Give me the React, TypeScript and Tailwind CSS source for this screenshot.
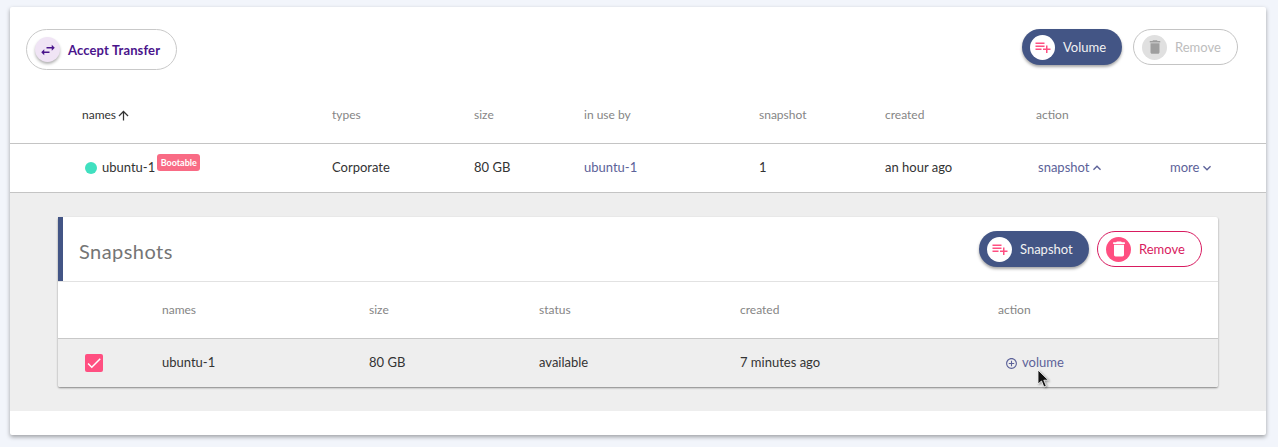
import React from "react";

const P = {
  trash: "M6 19c0 1.1.9 2 2 2h8c1.1 0 2-.9 2-2V7H6v12zM19 4h-3.5l-1-1h-5l-1 1H5v2h14V4z",
  add: "M14 10H2v2h12v-2zm0-4H2v2h12V6zm4 8v-4h-2v4h-4v2h4v4h2v-4h4v-2h-4zM2 16h8v-2H2v2z",
  swap: "M6.99 11L3 15l3.99 4v-3H14v-2H6.99v-3zM21 9l-3.99-4v3H10v2h7.01v3L21 9z",
  up: "M4 12l1.41 1.41L11 7.83V20h2V7.83l5.58 5.59L20 12l-8-8-8 8z",
  less: "M12 8l-6 6 1.41 1.41L12 10.83l4.59 4.58L18 14z",
  more: "M16.59 8.59L12 13.17 7.41 8.59 6 10l6 6 6-6z",
  circle: "M13 7h-2v4H7v2h4v4h2v-4h4v-2h-4V7zm-1-5C6.48 2 2 6.48 2 12s4.48 10 10 10 10-4.48 10-10S17.52 2 12 2zm0 18c-4.41 0-8-3.59-8-8s3.59-8 8-8 8 3.59 8 8-3.59 8-8 8z",
  check: "M9 16.17L4.83 12l-1.42 1.41L9 19 21 7l-1.41-1.41z",
};

function Icon({ d, className }: { d: string; className: string }) {
  return (
    <svg viewBox="0 0 24 24" fill="currentColor" className={className}>
      <path d={d} />
    </svg>
  );
}

function ActionButton({
  icon, label, wrap, circle, glyph, text,
}: { icon: string; label: string; wrap: string; circle: string; glyph: string; text: string }) {
  return (
    <button className={`flex items-center rounded-full pl-2 text-[13px] ${wrap}`}>
      <span className={`flex h-[25px] w-[25px] shrink-0 items-center justify-center rounded-full ${circle}`}>
        <Icon d={icon} className={glyph} />
      </span>
      <span className={`ml-2 pt-[2px] ${text}`}>{label}</span>
    </button>
  );
}

const mainCols = "grid grid-cols-[72px_250px_142px_110px_175px_126px_151px_134px_96px] items-center";
const subCols = "grid grid-cols-[104px_207px_170px_201px_258px_220px] items-center";

export default function App() {
  return (
    <div className="h-[447px] overflow-hidden bg-[#f2f5fb] px-[10px] pt-[7px] font-['Lato',sans-serif]">
      <div className="relative h-[428px] w-[1256px] rounded-[2px] bg-white shadow-[0_2px_4px_rgba(0,0,0,0.35)]">
        <div className="flex h-[80px] items-start justify-between pl-4 pr-[28px] pt-[22px]">
          <button className="flex h-[41px] w-[151px] items-center rounded-full border border-[#c9c9c9] pl-2 text-[13px] font-bold tracking-[0.13px] text-[#4a148c]">
            <span className="flex h-[25px] w-[25px] items-center justify-center rounded-full bg-[#f0e4f5] shadow-[0_2px_3px_rgba(0,0,0,0.3)]">
              <Icon d={P.swap} className="h-[18px] w-[18px]" />
            </span>
            <span className="ml-2 pt-[3px]">Accept Transfer</span>
          </button>
          <div className="flex gap-[11px]">
            <ActionButton
              icon={P.add}
              label="Volume"
              wrap="h-9 w-[100px] bg-[#435585] shadow-[0_2px_3px_rgba(0,0,0,0.35)]"
              circle="bg-white"
              glyph="h-[18px] w-[18px] text-[#ff4f81]"
              text="text-[#f2f2f2]"
            />
            <ActionButton
              icon={P.trash}
              label="Remove"
              wrap="h-9 w-[105px] border border-[#c4c4c4] bg-white"
              circle="bg-[#e0e0e0]"
              glyph="h-[18px] w-[18px] text-[#9e9e9e]"
              text="text-[#bdbdbd]"
            />
          </div>
        </div>

        <div className={`${mainCols} h-[57px] border-b border-[#c4c4c4] text-[12px] text-[#858585]`}>
          <span />
          <span className="flex items-center text-[#333333]">
            names
            <Icon d={P.up} className="h-[15px] w-[15px] text-[#333333]" />
          </span>
          <span>types</span>
          <span>size</span>
          <span>in use by</span>
          <span>snapshot</span>
          <span>created</span>
          <span>action</span>
          <span />
        </div>

        <div className={`${mainCols} h-[49px] border-b border-[#c4c4c4] text-[13px] text-[#333333]`}>
          <span />
          <span className="flex items-center">
            <span className="ml-[3px] mr-[5px] h-3 w-3 rounded-full bg-[#40e0c0]" />
            ubuntu-1
            <span className="mb-[11px] ml-[2px] flex h-[17px] w-[43px] items-center justify-center rounded-[3px] bg-[#f96b85] text-[9px] font-bold text-[#fff]">
              Bootable
            </span>
          </span>
          <span>Corporate</span>
          <span>80 GB</span>
          <span className="text-[#5c6299]">ubuntu-1</span>
          <span>1</span>
          <span>an hour ago</span>
          <span className="ml-[2px] flex items-center text-[#5c6299]">
            snapshot
            <Icon d={P.less} className="h-4 w-4" />
          </span>
          <span className="flex items-center text-[#5c6299]">
            more
            <Icon d={P.more} className="h-4 w-4" />
          </span>
        </div>

        <div className="bg-[#eeeeee] px-12 py-6">
          <div className="rounded-[2px] bg-white shadow-[0_1px_2px_rgba(0,0,0,0.45)]">
            <div className="flex h-[64px] items-start justify-between border-l-[5px] border-[#435585] pl-4 pr-4 pt-[14px]">
              <span className="mt-[7px] text-[20px] leading-[26px] tracking-[0.45px] text-[#757575]">Snapshots</span>
              <div className="flex gap-2">
                <ActionButton
                  icon={P.add}
                  label="Snapshot"
                  wrap="h-9 w-[110px] bg-[#435585] shadow-[0_2px_3px_rgba(0,0,0,0.35)]"
                  circle="bg-white"
                  glyph="h-[18px] w-[18px] text-[#ff4f81]"
                  text="ml-2 text-[#f2f2f2]"
                />
                <ActionButton
                  icon={P.trash}
                  label="Remove"
                  wrap="h-9 w-[105px] border border-[#d81b60] bg-white"
                  circle="bg-[#ff4f81]"
                  glyph="h-5 w-5 text-white"
                  text="text-[#d81b60]"
                />
              </div>
            </div>
            <div className={`${subCols} h-[58px] border-y border-y-[#c8c8c8] border-t-[#e2e2e2] text-[12px] text-[#858585]`}>
              <span />
              <span>names</span>
              <span>size</span>
              <span>status</span>
              <span>created</span>
              <span>action</span>
            </div>
            <div className={`${subCols} relative h-[48px] rounded-b-[2px] bg-[#eeeeee] text-[13px] text-[#333333]`}>
              <span className="ml-[27px] flex h-[18px] w-[18px] items-center justify-center rounded-[2px] bg-[#ff4f81]">
                <Icon d={P.check} className="h-[18px] w-[18px] text-white" />
              </span>
              <span>ubuntu-1</span>
              <span>80 GB</span>
              <span>available</span>
              <span>7 minutes ago</span>
              <span className="ml-[7px] flex items-center text-[#5c6299]">
                <Icon d={P.circle} className="mr-[4px] h-[13px] w-[13px]" />
                volume
              </span>
              <svg viewBox="0 0 14 20" className="absolute left-[979px] top-[30px] h-[20px] w-[14px] drop-shadow-[1px_1px_1px_rgba(0,0,0,0.4)]">
                <path d="M1 1v14l3.500-3 2.400 6 2.400-1-2.500-5.800h4.600z" fill="#111" stroke="#fff" strokeWidth="0.8" />
              </svg>
            </div>
          </div>
        </div>
      </div>
    </div>
  );
}
